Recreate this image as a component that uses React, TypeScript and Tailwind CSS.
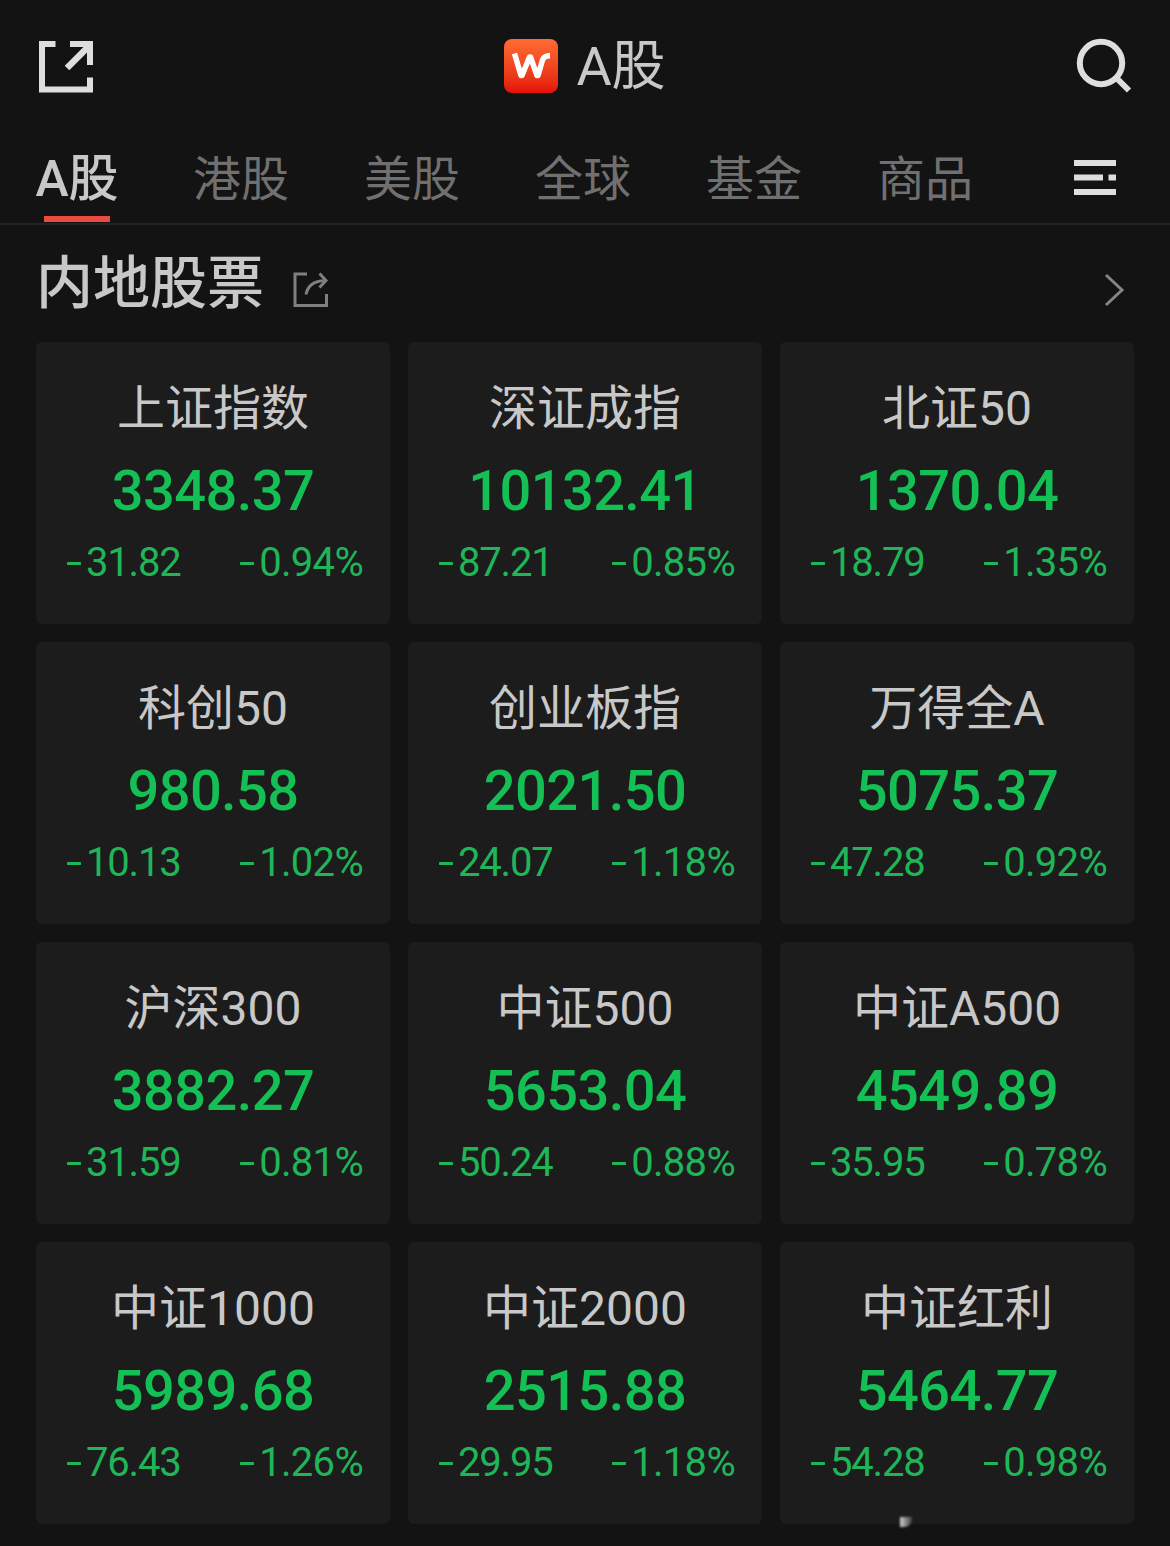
const tabs = ['港股', '美股', '全球', '基金', '商品'];

type Quote = { name: string; price: string; change: string; percent: string };

const quotes: Quote[] = [
  { name: '上证指数', price: '3348.37', change: '31.82', percent: '0.94%' },
  { name: '深证成指', price: '10132.41', change: '87.21', percent: '0.85%' },
  { name: '北证50', price: '1370.04', change: '18.79', percent: '1.35%' },
  { name: '科创50', price: '980.58', change: '10.13', percent: '1.02%' },
  { name: '创业板指', price: '2021.50', change: '24.07', percent: '1.18%' },
  { name: '万得全A', price: '5075.37', change: '47.28', percent: '0.92%' },
  { name: '沪深300', price: '3882.27', change: '31.59', percent: '0.81%' },
  { name: '中证500', price: '5653.04', change: '50.24', percent: '0.88%' },
  { name: '中证A500', price: '4549.89', change: '35.95', percent: '0.78%' },
  { name: '中证1000', price: '5989.68', change: '76.43', percent: '1.26%' },
  { name: '中证2000', price: '2515.88', change: '29.95', percent: '1.18%' },
  { name: '中证红利', price: '5464.77', change: '54.28', percent: '0.98%' },
];

function Delta({ value }: { value: string }) {
  return (
    <span className="flex">
      <span className="w-[20px] origin-left scale-x-[1.45]">-</span>
      <span>{value}</span>
    </span>
  );
}

function Card({ quote }: { quote: Quote }) {
  return (
    <div className="flex h-[282px] flex-col rounded-md bg-[#1c1c1c] px-[26px] pt-[39px]">
      <div className="text-center text-[48px] leading-[56px] text-[#c8c8c8]">{quote.name}</div>
      <div className="mt-[22px] text-center text-[56px] leading-[64px] font-medium tracking-[-0.6px] text-[#14bf55]">
        {quote.price}
      </div>
      <div className="mt-[16px] flex justify-between pr-px pl-[4px] text-[40px] leading-[48px] text-[#1fb558]">
        <div className="tracking-[-1.2px]">
          <Delta value={quote.change} />
        </div>
        <div className="tracking-[-0.7px]">
          <Delta value={quote.percent} />
        </div>
      </div>
    </div>
  );
}

export default function App() {
  return (
    <div
      lang="zh-CN"
      className="relative h-[1546px] w-[1170px] overflow-hidden bg-[#131313] font-[Roboto,'Noto_Sans_CJK_SC',sans-serif]"
    >
      <header className="flex h-[132px] items-center justify-between px-[36px]">
        <svg className="h-[60px] w-[60px]" viewBox="0 0 60 60" fill="none" stroke="#dedede" strokeWidth="6">
          <path d="M19.500 8H6V53.500H54V41.500M34 8H54V29" />
          <path d="M53 10L31 32" strokeWidth="6.500" />
          <path d="M45 8H54V18Z" fill="#dedede" stroke="none" />
        </svg>
        <div className="flex items-center gap-[18px]">
          <div className="flex h-[54px] w-[54px] items-center justify-center rounded-lg bg-linear-to-b from-[#ff6a33] to-[#e40d08]">
            <svg className="h-[54px] w-[54px]" viewBox="0 0 54 54" fill="none" stroke="#fff" strokeWidth="5.500" strokeLinejoin="round">
              <path d="M10.500 14.500L17 36.500H18L25.500 18H26.500L33 36.500H34L38.500 21Q40.200 16.800 46 16.800" />
            </svg>
          </div>
          <h1 className="pt-[2px] text-[54px] leading-[60px] text-[#c8c8c8]">A股</h1>
        </div>
        <svg className="h-[60px] w-[60px]" viewBox="0 0 60 60" fill="none" stroke="#dedede" strokeWidth="6">
          <circle cx="27" cy="27" r="21.200" />
          <path d="M41.500 41L55 54.500" />
        </svg>
      </header>
      <nav className="flex h-[93px] items-start border-b-2 border-[#242424] pr-[53px] pl-[35px] text-[48px] leading-[56px] text-[#707070]">
        <div className="mr-[74px] flex w-[84px] flex-col items-center pt-[19px] text-[#c8c8c8]">
          <span className="text-[50px] font-medium whitespace-nowrap">A股</span>
          <span className="mt-[9px] h-[6px] w-[66px] bg-[#ec4b40]" />
        </div>
        <div className="flex gap-[75px] pt-[20px]">
          {tabs.map((t) => (
            <span key={t}>{t}</span>
          ))}
        </div>
        <svg className="mt-[28px] ml-auto h-[36px] w-[44px]" viewBox="0 0 44 36" fill="#dedede">
          <path d="M1 0h42v6H1zM1 14.500h29v6H1zM35.500 14.500h7.500v6h-7.500zM1 29h42v6H1z" />
        </svg>
      </nav>
      <div className="flex h-[117px] items-center pr-[44px] pl-[36px]">
        <h2 className="mt-px text-[57px] leading-[64px] font-medium text-[#c8c8c8]">内地股票</h2>
        <svg className="mt-[11px] ml-[28px] h-[38px] w-[38px]" viewBox="0 0 38 38" fill="none" stroke="#808080" strokeWidth="3">
          <path d="M15 4H3V35.500H34.500V24M14 24.500C15.500 16 22 11 33 10.500M27.500 3.500L34 10.500L27.500 17.500" />
        </svg>
        <svg className="mt-[12px] ml-auto h-[36px] w-[24px]" viewBox="0 0 24 36" fill="none" stroke="#858585" strokeWidth="3">
          <path d="M4 3L20 18L4 33" />
        </svg>
      </div>
      <main className="grid grid-cols-3 gap-[18px] px-[36px]">
        {quotes.map((q) => (
          <Card key={q.name} quote={q} />
        ))}
      </main>
      <div className="absolute top-[1517px] left-[900px] h-[10px] w-[12px] rounded-br-lg bg-linear-to-r from-[#d0d0d0] to-[#444444] blur-[1px]" />
    </div>
  );
}
